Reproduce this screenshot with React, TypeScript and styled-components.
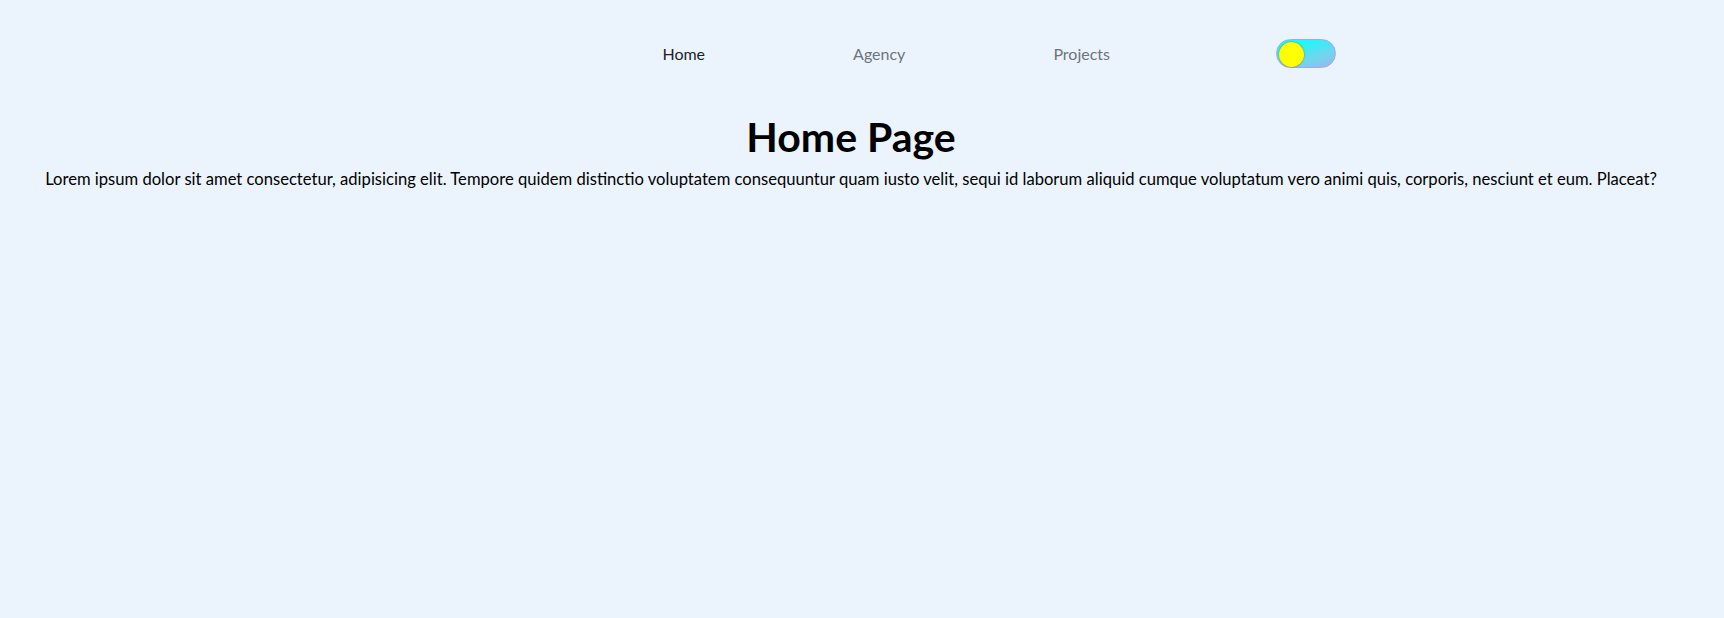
import React from "react";
import styled, { createGlobalStyle } from "styled-components";

const Global = createGlobalStyle`
  html, body {
    margin: 0;
    padding: 0;
    background: #ebf4fc;
  }
  body {
    font-family: Lato, "Noto Sans", "Liberation Sans", sans-serif;
    color: #000;
  }
`;

const Page = styled.div`
  min-height: 618px;
  background: #ebf4fc;
`;

const Nav = styled.nav`
  display: flex;
  justify-content: flex-end;
  align-items: center;
  padding: 39px 388px 0 0;
  height: 29px;
`;

const Links = styled.ul`
  display: flex;
  align-items: center;
  gap: 148px;
  list-style: none;
  margin: 0 166px 0 0;
  padding: 0;
`;

const Link = styled.a<{ $active?: boolean }>`
  font-size: 16px;
  text-decoration: none;
  color: ${(p) => (p.$active ? "#1b1f2a" : "#6c757d")};
  cursor: pointer;
`;

const Toggle = styled.button`
  position: relative;
  width: 60px;
  height: 29px;
  padding: 0;
  border-radius: 15px;
  border: 1px solid #a9a6e6;
  background: linear-gradient(160deg, #14fbff 20%, #6fd6ee 65%, #97b8ef 100%);
  cursor: pointer;
`;

const Knob = styled.span`
  position: absolute;
  left: 2px;
  top: 2px;
  width: 25px;
  height: 25px;
  border-radius: 50%;
  background: #ffff00;
  box-shadow: 0 0 1px 0.5px rgba(120, 120, 90, 0.6);
`;

const Main = styled.main`
  text-align: center;
  padding: 0 22px 0 0;
`;

const Title = styled.h1`
  font-size: 41px;
  font-weight: 700;
  margin: 44px 0 6px;
  line-height: 1.2;
`;

const Text = styled.p`
  font-size: 16.6px;
  margin: 0;
  line-height: 1.5;
`;

export default function App() {
  return (
    <Page>
      <Global />
      <Nav>
        <Links>
          <li>
            <Link $active>Home</Link>
          </li>
          <li>
            <Link>Agency</Link>
          </li>
          <li>
            <Link>Projects</Link>
          </li>
        </Links>
        <Toggle aria-label="toggle theme">
          <Knob />
        </Toggle>
      </Nav>
      <Main>
        <Title>Home Page</Title>
        <Text>
          Lorem ipsum dolor sit amet consectetur, adipisicing elit. Tempore quidem distinctio voluptatem
          consequuntur quam iusto velit, sequi id laborum aliquid cumque voluptatum vero animi quis, corporis,
          nesciunt et eum. Placeat?
        </Text>
      </Main>
    </Page>
  );
}
